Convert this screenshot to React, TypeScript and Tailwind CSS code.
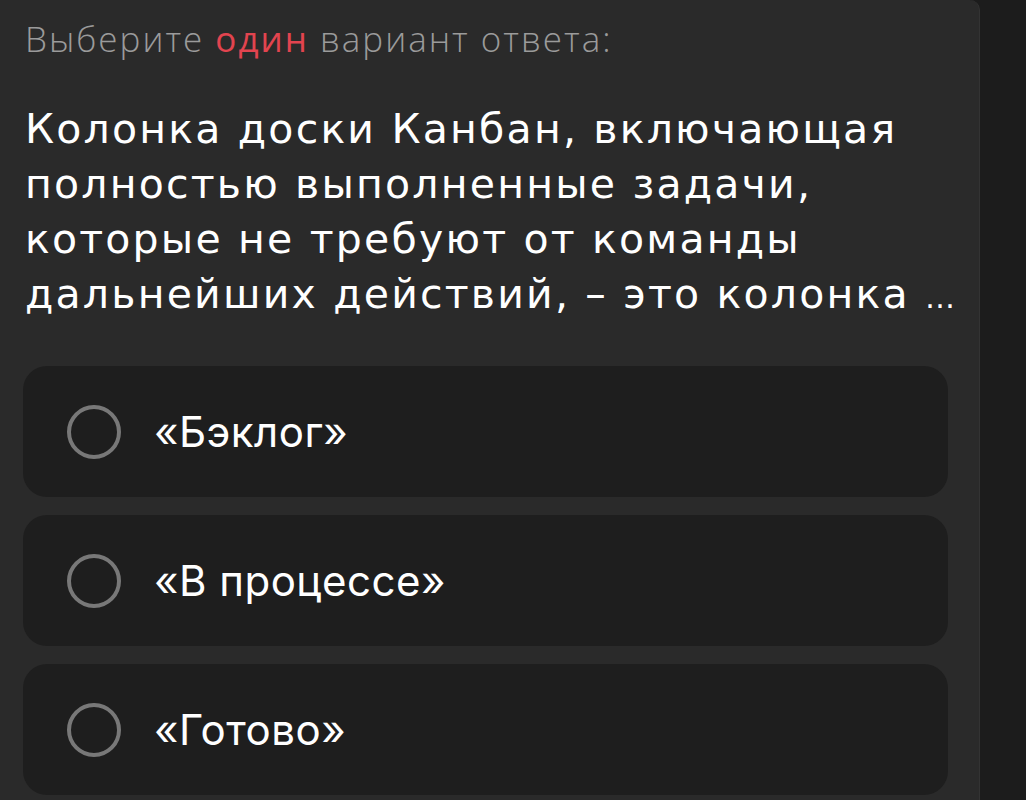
const options = ["«Бэклог»", "«В процессе»", "«Готово»"];

function Radio() {
  return (
    <span className="block h-[54px] w-[54px] shrink-0 rounded-full border-[4px] border-[#787878]" />
  );
}

export default function App() {
  return (
    <div className="flex h-[800px] w-full overflow-hidden bg-[#1c1c1c]">
      <div className="w-[980px] shrink-0 rounded-tr-[10px] border-r border-[#333333] bg-[#2a2a2a] pl-[23px] pr-[31px]">
        <p className="mt-[14px] pl-[2px] font-['Open_Sans',sans-serif] text-[35px] font-light leading-[50px] tracking-[2px] text-[#9b9b9b]">
          Выберите <span className="font-normal text-[#e2444f]">один</span> вариант ответа:
        </p>

        <h1 className="mt-[38px] whitespace-nowrap pl-[2px] font-['DejaVu_Sans',sans-serif] text-[41px] font-normal leading-[55px] tracking-[2.2px] text-white">
          Колонка доски Канбан, включающая
          <br />
          полностью выполненные задачи,
          <br />
          которые не требуют от команды
          <br />
          дальнейших действий, – это колонка{" "}
          <span className="text-[30px] leading-none tracking-[-1px]">…</span>
        </h1>

        <div className="mt-[44px] flex flex-col gap-[18px]">
          {options.map((o) => (
            <label
              key={o}
              className="flex h-[131px] items-center gap-[33px] rounded-[24px] bg-[#1e1e1e] pl-[44px]"
            >
              <Radio />
              <span className="font-['Inter',sans-serif] text-[42px] leading-none tracking-[0.5px] text-white">
                {o}
              </span>
            </label>
          ))}
        </div>
      </div>
    </div>
  );
}
